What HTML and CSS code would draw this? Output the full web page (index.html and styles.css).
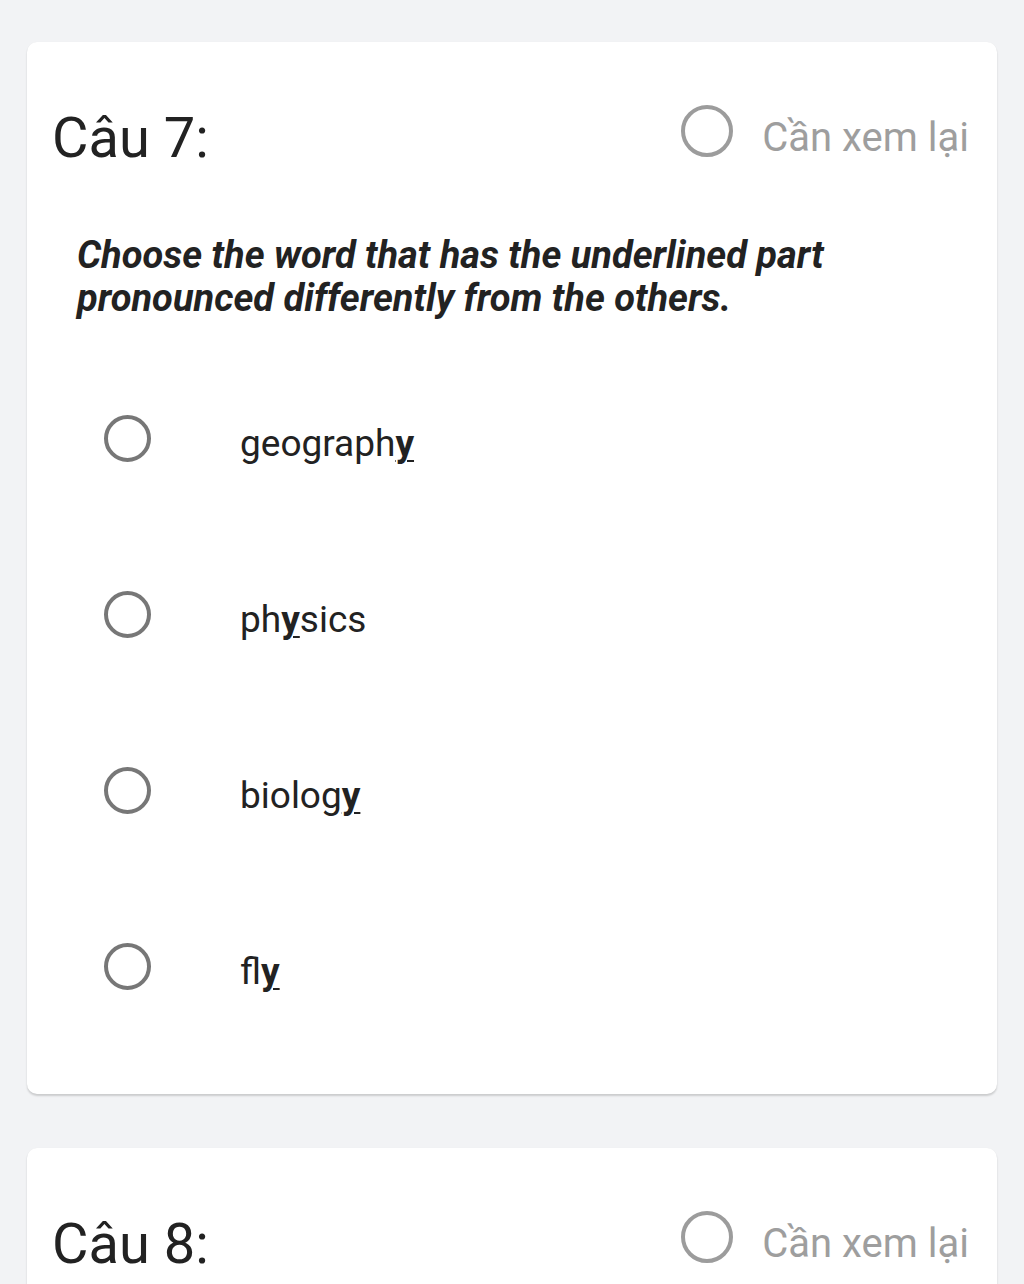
FILE: index.html
```html
<!DOCTYPE html>
<html lang="vi">
<head>
<meta charset="utf-8">
<title>Quiz</title>
<link rel="stylesheet" href="styles.css">
</head>
<body>
<main class="page">
  <section class="card">
    <header class="card-head">
      <h2 class="q-title">Câu 7:</h2>
      <label class="review">
        <span class="radio radio-review"></span>
        <span class="review-text">Cần xem lại</span>
      </label>
    </header>
    <p class="q-text">Choose the word that has the underlined part pronounced differently from the others.</p>
    <ul class="options">
      <li class="option"><span class="radio radio-opt"></span><span class="opt-text">geograph<u class="mark">y</u></span></li>
      <li class="option"><span class="radio radio-opt"></span><span class="opt-text">ph<u class="mark">y</u>sics</span></li>
      <li class="option"><span class="radio radio-opt"></span><span class="opt-text">biolog<u class="mark">y</u></span></li>
      <li class="option"><span class="radio radio-opt"></span><span class="opt-text">fl<u class="mark">y</u></span></li>
    </ul>
  </section>
  <section class="card">
    <header class="card-head">
      <h2 class="q-title">Câu 8:</h2>
      <label class="review">
        <span class="radio radio-review"></span>
        <span class="review-text">Cần xem lại</span>
      </label>
    </header>
  </section>
</main>
</body>
</html>
```
FILE: styles.css
```css
html, body {
  margin: 0;
  padding: 0;
  background: #f2f3f5;
}
body {
  font-family: Roboto, "Noto Sans", sans-serif;
  color: #222;
}
.page {
  display: flex;
  flex-direction: column;
  gap: 54px;
  padding: 42px 27px 0 27px;
}
.card {
  background: #fff;
  border-radius: 10px;
  box-shadow: 0 2px 2px rgba(0, 0, 0, 0.16), 0 0 1px rgba(0, 0, 0, 0.06);
  padding: 66px 28px 40px 25px;
}
.card-head {
  display: flex;
  align-items: center;
  justify-content: space-between;
  height: 60px;
}
.q-title {
  margin: 0;
  font-weight: 400;
  font-size: 56px;
  line-height: 60px;
  color: #222;
}
.review {
  display: flex;
  align-items: center;
  gap: 29px;
}
.radio {
  display: block;
  box-sizing: border-box;
  border-radius: 50%;
  flex: none;
}
.radio-review {
  width: 52px;
  height: 52px;
  border: 4.5px solid #9c9c9c;
  margin-top: -14px;
}
.review-text {
  font-size: 40px;
  line-height: 48px;
  color: #9e9e9e;
}
.q-text {
  margin: 66px 0 0 25px;
  font-weight: 700;
  font-style: italic;
  font-size: 38px;
  line-height: 43px;
  color: #222;
  max-width: 790px;
}
.options {
  list-style: none;
  margin: 30px 0 0 0;
  padding: 0 0 0 52px;
}
.option {
  display: flex;
  align-items: center;
  height: 176px;
}
.radio-opt {
  width: 47px;
  height: 47px;
  border: 4.5px solid #777;
}
.opt-text {
  margin-left: 89px;
  font-size: 37px;
  line-height: 44px;
  color: #222;
  padding-top: 12px;
}
.mark {
  font-weight: 700;
  text-decoration-thickness: 2px;
  text-underline-offset: 4px;
}
```
